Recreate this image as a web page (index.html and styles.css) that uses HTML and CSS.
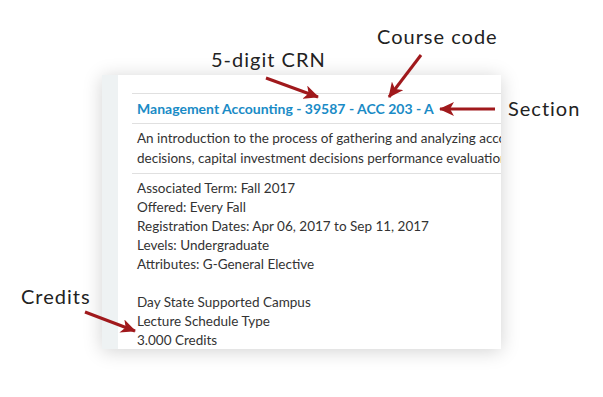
FILE: index.html
```html
<!DOCTYPE html>
<html lang="en">
<head>
    <meta charset="UTF-8">
    <meta name="viewport" content="width=device-width, initial-scale=1.0">
    <title>Course Details</title>
    <link rel="stylesheet" href="styles.css">
</head>
<body>

<div class="page">
    <div class="card">
        <div class="card-strip"></div>
        <div class="card-body">
            <div class="course-title">Management Accounting - 39587 - ACC 203 - A</div>
            <div class="course-desc">
                <div class="line">An introduction to the process of gathering and analyzing accounting information for managerial</div>
                <div class="line">decisions, capital investment decisions performance evaluation and cost control.</div>
            </div>
            <div class="course-info">
                <div>Associated Term: Fall 2017</div>
                <div>Offered: Every Fall</div>
                <div>Registration Dates: Apr 06, 2017 to Sep 11, 2017</div>
                <div>Levels: Undergraduate</div>
                <div>Attributes: G-General Elective</div>
                <div class="spacer"></div>
                <div>Day State Supported Campus</div>
                <div>Lecture Schedule Type</div>
                <div>3.000 Credits</div>
            </div>
        </div>
    </div>

    <!-- annotation labels and arrows -->
    <div class="note note-code">Course code</div>
    <div class="note note-crn">5-digit CRN</div>
    <div class="note note-section">Section</div>
    <div class="note note-credits">Credits</div>

    <svg class="arrows" width="603" height="397" viewBox="0 0 603 397">
        <defs>
            <marker id="head" markerUnits="userSpaceOnUse" markerWidth="16" markerHeight="14" refX="14" refY="7" orient="auto">
                <path d="M0,0 L15,7 L0,14 L4,7 Z" fill="#a0191c"/>
            </marker>
        </defs>
        <g stroke="#a0191c" stroke-width="3" fill="none" marker-end="url(#head)">
            <line x1="266" y1="78" x2="318" y2="97"/>
            <line x1="421" y1="55" x2="389" y2="97"/>
            <line x1="495" y1="109" x2="440" y2="109"/>
            <line x1="85" y1="312" x2="135" y2="331"/>
        </g>
    </svg>
</div>

</body>
</html>
```

FILE: styles.css
```css
body {
    margin: 0;
    background-color: #fff;
    font-family: Lato, "Open Sans", sans-serif;
    color: #333;
}
.page {
    position: relative;
    width: 603px;
    height: 397px;
    overflow: hidden;
}
.card {
    display: flex;
    width: 399px;
    height: 274px;
    margin: 75px 0 0 102px;
    background-color: #fff;
    box-shadow: 0 2px 18px rgba(0, 0, 0, 0.18);
    overflow: hidden;
}
.card-strip {
    width: 16px;
    flex-shrink: 0;
    background-color: #eef2f3;
}
.card-body {
    flex: 1;
    min-width: 0;
    padding: 18px 0 0 14px;
    font-size: 13.5px;
    overflow: hidden;
}
.course-title {
    border-top: 1px solid #e0e0e0;
    border-bottom: 1px solid #e0e0e0;
    padding: 0 5px;
    height: 29px;
    line-height: 29px;
    font-size: 14px;
    font-weight: bold;
    color: #1a8bc6;
    white-space: nowrap;
}
.course-desc {
    border-bottom: 1px solid #e0e0e0;
    padding: 4px 5px 5px;
    line-height: 20px;
}
.course-desc .line {
    white-space: nowrap;
}
.course-info {
    padding: 5px 5px 0;
    line-height: 19px;
    white-space: nowrap;
}
.spacer {
    height: 19px;
}
.note {
    position: absolute;
    font-size: 20px;
    letter-spacing: 1px;
    color: #222;
    white-space: nowrap;
}
.note-code {
    left: 377px;
    top: 24px;
}
.note-crn {
    left: 211px;
    top: 47px;
}
.note-section {
    left: 508px;
    top: 96px;
}
.note-credits {
    left: 21px;
    top: 284px;
}
.arrows {
    position: absolute;
    left: 0;
    top: 0;
}
```
